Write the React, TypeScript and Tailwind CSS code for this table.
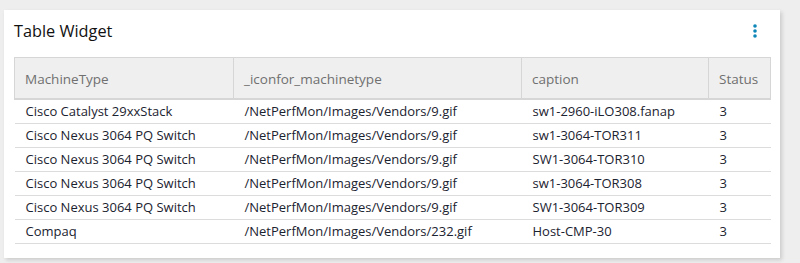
import React from "react";

const rows = [
  ["Cisco Catalyst 29xxStack", "/NetPerfMon/Images/Vendors/9.gif", "sw1-2960-iLO308.fanap", "3"],
  ["Cisco Nexus 3064 PQ Switch", "/NetPerfMon/Images/Vendors/9.gif", "sw1-3064-TOR311", "3"],
  ["Cisco Nexus 3064 PQ Switch", "/NetPerfMon/Images/Vendors/9.gif", "SW1-3064-TOR310", "3"],
  ["Cisco Nexus 3064 PQ Switch", "/NetPerfMon/Images/Vendors/9.gif", "sw1-3064-TOR308", "3"],
  ["Cisco Nexus 3064 PQ Switch", "/NetPerfMon/Images/Vendors/9.gif", "SW1-3064-TOR309", "3"],
  ["Compaq", "/NetPerfMon/Images/Vendors/232.gif", "Host-CMP-30", "3"],
];

export default function App() {
  return (
    <div
      className="w-[800px] h-[263px] bg-[#eeeeee] pt-[10px] pl-[4px]"
      style={{ fontFamily: '"Open Sans", sans-serif' }}
    >
      <div className="w-[776px] h-[248px] bg-white shadow-[2px_2px_4px_rgba(0,0,0,0.15)] px-[10px] pt-[10px]">
        <div className="flex items-center justify-between h-[22px] mt-[0px]">
          <div className="text-[16.3px] text-[#111] leading-[22px]">Table Widget</div>
          <svg width="6" height="16" viewBox="0 0 6 16" className="mr-[12px]">
            <circle cx="3" cy="3" r="1.8" fill="#0d86b8" />
            <circle cx="3" cy="8" r="1.8" fill="#0d86b8" />
            <circle cx="3" cy="13" r="1.8" fill="#0d86b8" />
          </svg>
        </div>
        <table className="mt-[15px] w-[756px] border-collapse text-[13px] table-fixed">
          <colgroup>
            <col className="w-[219px]" />
            <col className="w-[288px]" />
            <col className="w-[187px]" />
            <col className="w-[62px]" />
          </colgroup>
          <thead>
            <tr className="h-[41px] bg-[#efefef]">
              {["MachineType", "_iconfor_machinetype", "caption", "Status"].map((h) => (
                <th
                  key={h}
                  className="border border-[#d6d6d6] border-b-2 text-left font-normal text-[13.5px] text-[#707070] pl-[10px] pt-[2px]"
                >
                  {h}
                </th>
              ))}
            </tr>
          </thead>
          <tbody>
            {rows.map((r, i) => (
              <tr key={i} className="h-[24px] border-b border-[#dcdcdc]">
                {r.map((c, j) => (
                  <td key={j} className="pl-[11px] text-[#1b2330] whitespace-nowrap leading-[23px]">
                    {c}
                  </td>
                ))}
              </tr>
            ))}
          </tbody>
        </table>
      </div>
    </div>
  );
}
